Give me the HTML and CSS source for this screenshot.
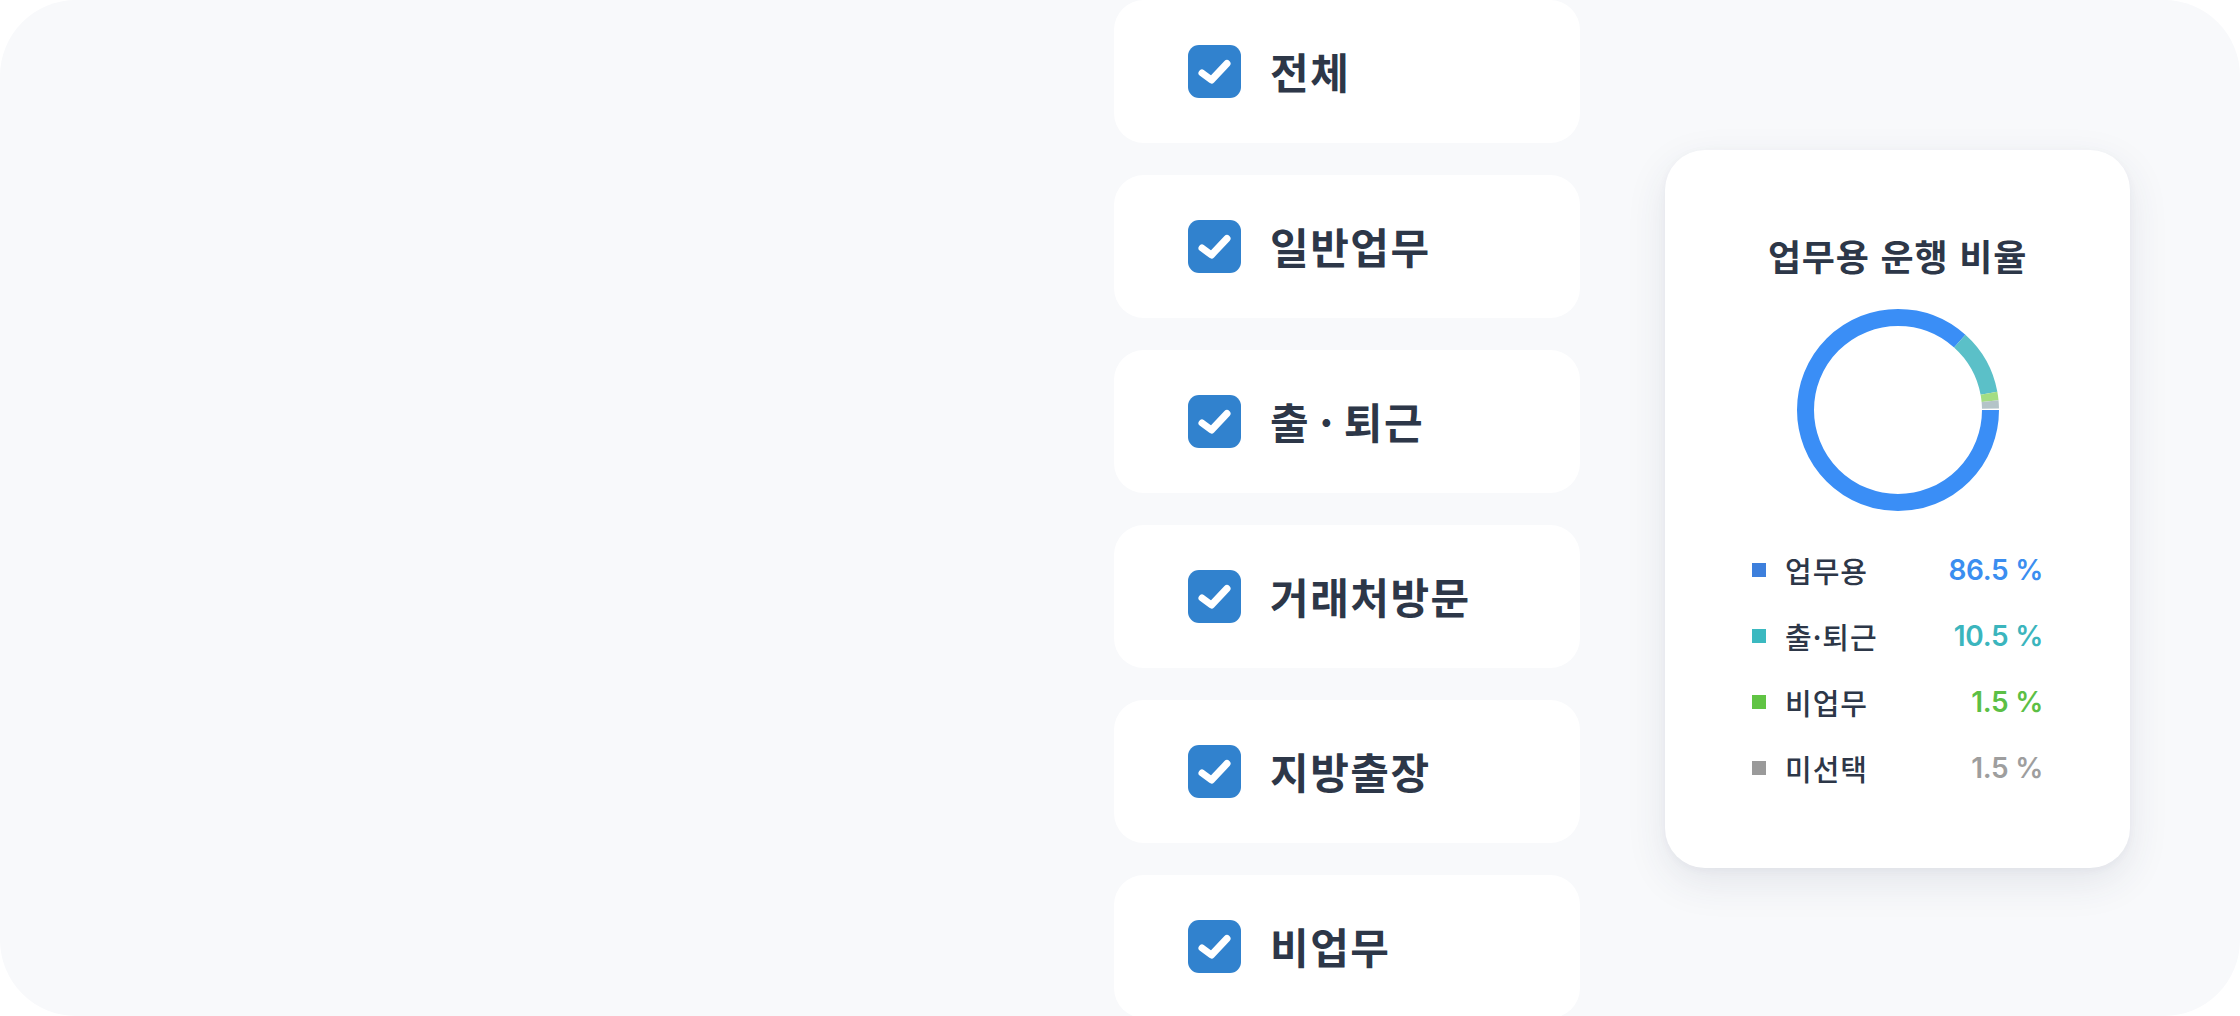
FILE: index.html
```html
<!DOCTYPE html>
<html lang="ko">
<head>
<meta charset="utf-8">
<title>업무용 운행 비율</title>
<link rel="stylesheet" href="styles.css">
</head>
<body>
<div class="stage">
  <div class="filters">
    <div class="filter-card">
      <span class="check"><svg viewBox="0 0 53 53" width="53" height="53"><path d="M14 28 L23.5 35 L39 18.5" fill="none" stroke="#fff" stroke-width="7" stroke-linecap="round" stroke-linejoin="round"/></svg></span>
      <span class="label">전체</span>
    </div>
    <div class="filter-card">
      <span class="check"><svg viewBox="0 0 53 53" width="53" height="53"><path d="M14 28 L23.5 35 L39 18.5" fill="none" stroke="#fff" stroke-width="7" stroke-linecap="round" stroke-linejoin="round"/></svg></span>
      <span class="label">일반업무</span>
    </div>
    <div class="filter-card">
      <span class="check"><svg viewBox="0 0 53 53" width="53" height="53"><path d="M14 28 L23.5 35 L39 18.5" fill="none" stroke="#fff" stroke-width="7" stroke-linecap="round" stroke-linejoin="round"/></svg></span>
      <span class="label">출 · 퇴근</span>
    </div>
    <div class="filter-card">
      <span class="check"><svg viewBox="0 0 53 53" width="53" height="53"><path d="M14 28 L23.5 35 L39 18.5" fill="none" stroke="#fff" stroke-width="7" stroke-linecap="round" stroke-linejoin="round"/></svg></span>
      <span class="label">거래처방문</span>
    </div>
    <div class="filter-card">
      <span class="check"><svg viewBox="0 0 53 53" width="53" height="53"><path d="M14 28 L23.5 35 L39 18.5" fill="none" stroke="#fff" stroke-width="7" stroke-linecap="round" stroke-linejoin="round"/></svg></span>
      <span class="label">지방출장</span>
    </div>
    <div class="filter-card">
      <span class="check"><svg viewBox="0 0 53 53" width="53" height="53"><path d="M14 28 L23.5 35 L39 18.5" fill="none" stroke="#fff" stroke-width="7" stroke-linecap="round" stroke-linejoin="round"/></svg></span>
      <span class="label">비업무</span>
    </div>
  </div>

  <div class="chart-card">
    <h2 class="chart-title">업무용 운행 비율</h2>
    <svg class="donut" viewBox="0 0 202 202" width="202" height="202">
      <circle cx="101" cy="101" r="92.5" fill="none" stroke="#3a8ef6" stroke-width="17" stroke-dasharray="502.7 578.8" stroke-dashoffset="0"/>
      <circle cx="101" cy="101" r="92.5" fill="none" stroke="#5bc0c8" stroke-width="17" stroke-dasharray="60.8 578.8" stroke-dashoffset="-502.7"/>
      <circle cx="101" cy="101" r="92.5" fill="none" stroke="#a4dd82" stroke-width="17" stroke-dasharray="7.7 578.8" stroke-dashoffset="-563.5"/>
      <circle cx="101" cy="101" r="92.5" fill="none" stroke="#b4c4c8" stroke-width="17" stroke-dasharray="7.6 578.8" stroke-dashoffset="-571.2"/>
    </svg>
    <ul class="legend">
      <li class="legend-row"><span class="sw sw-blue"></span><span class="name">업무용</span><span class="val val-blue">86.5 %</span></li>
      <li class="legend-row"><span class="sw sw-teal"></span><span class="name">출·퇴근</span><span class="val val-teal">10.5 %</span></li>
      <li class="legend-row"><span class="sw sw-green"></span><span class="name">비업무</span><span class="val val-green">1.5 %</span></li>
      <li class="legend-row"><span class="sw sw-gray"></span><span class="name">미선택</span><span class="val val-gray">1.5 %</span></li>
    </ul>
  </div>
</div>
</body>
</html>
```

FILE: styles.css
```css
html, body {
  margin: 0;
  padding: 0;
  background: #ffffff;
}

body {
  width: 2240px;
  height: 1016px;
  overflow: hidden;
  font-family: "Noto Sans CJK KR", "Noto Sans", sans-serif;
}

.stage {
  width: 2240px;
  height: 1016px;
  box-sizing: border-box;
  background: #f8f9fb;
  border-radius: 76px;
  overflow: hidden;
  display: flex;
  align-items: flex-start;
  padding-left: 1114px;
  gap: 85px;
}

.filters {
  width: 466px;
  display: flex;
  flex-direction: column;
  gap: 32px;
  flex-shrink: 0;
}

.filter-card {
  height: 143px;
  flex-shrink: 0;
  background: #ffffff;
  border-radius: 30px;
  display: flex;
  align-items: center;
  padding-left: 74px;
  gap: 29px;
}

.check {
  width: 53px;
  height: 53px;
  border-radius: 11px;
  background: #3182ce;
  display: block;
  flex-shrink: 0;
}

.check svg {
  display: block;
}

.label {
  font-size: 42px;
  font-weight: 700;
  color: #2d3748;
  letter-spacing: 1.5px;
  word-spacing: -4px;
  line-height: 1;
  padding-bottom: 2px;
}

.chart-card {
  margin-top: 150px;
  width: 465px;
  height: 718px;
  flex-shrink: 0;
  box-sizing: border-box;
  background: #ffffff;
  border-radius: 40px;
  box-shadow: 0 14px 40px rgba(45, 60, 90, 0.10), 0 2px 8px rgba(45, 60, 90, 0.04);
  display: flex;
  flex-direction: column;
  align-items: center;
  padding-top: 84px;
}

.chart-title {
  margin: 0;
  font-size: 36px;
  font-weight: 700;
  color: #2d3748;
  letter-spacing: 0.8px;
  line-height: 42px;
}

.donut {
  display: block;
  margin-top: 33px;
}

.legend {
  list-style: none;
  margin: 39px 0 0 0;
  padding: 0;
  width: 291px;
  display: flex;
  flex-direction: column;
  gap: 26px;
}

.legend-row {
  display: flex;
  align-items: center;
  height: 40px;
}

.sw {
  width: 14px;
  height: 14px;
  flex-shrink: 0;
}
.sw-blue { background: #3d7fdc; }
.sw-teal { background: #3bb9c0; }
.sw-green { background: #60c444; }
.sw-gray { background: #9a9a9a; }

.name {
  margin-left: 19px;
  font-size: 29px;
  font-weight: 500;
  color: #2d3748;
  letter-spacing: 1px;
  flex: 1;
}

.val {
  font-family: "Inter", "Noto Sans", sans-serif;
  font-size: 28px;
  font-weight: 600;
  letter-spacing: -0.3px;
}
.val-blue { color: #3b8ef0; }
.val-teal { color: #3bb5bd; }
.val-green { color: #5cbf45; }
.val-gray { color: #9e9e9e; }
```
